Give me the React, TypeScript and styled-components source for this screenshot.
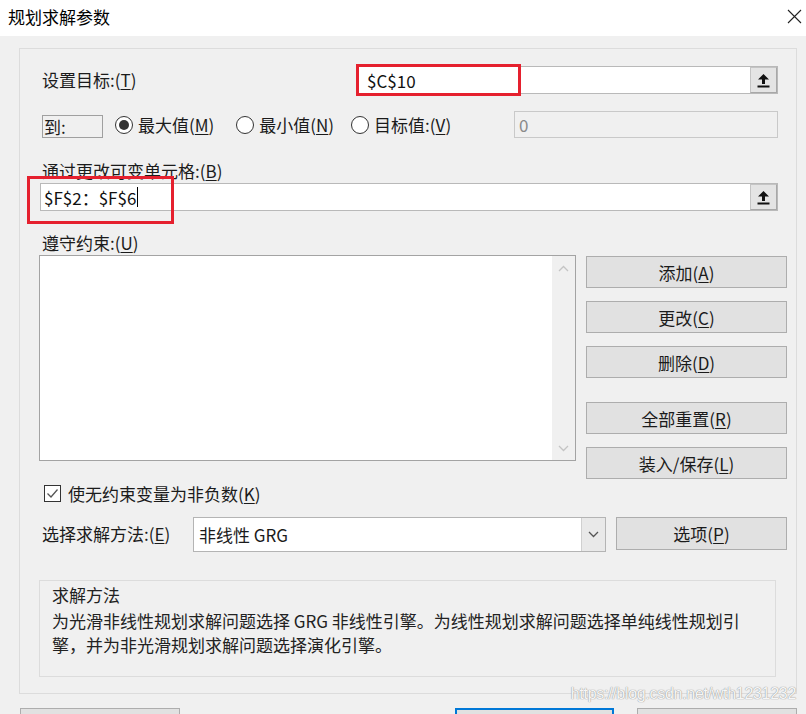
import React from 'react'
import styled, { createGlobalStyle } from 'styled-components'

const GlobalStyle = createGlobalStyle`
  html, body {
    margin: 0;
    padding: 0;
    background: #f0f0f0;
  }
  body {
    font-family: "Noto Sans CJK SC", "Noto Sans", sans-serif;
    color: #1b1b1b;
  }
`

const Window = styled.div`
  width: 806px;
  height: 714px;
  position: relative;
  overflow: hidden;
  background: #f0f0f0;
`

const TitleBar = styled.div`
  height: 36px;
  box-sizing: border-box;
  background: #fff;
  display: flex;
  align-items: center;
  justify-content: space-between;
  padding: 0 4px 4px 8px;
  font-size: 17px;
  color: #000;
`

const Body = styled.div`
  padding: 12px 9px 0 19px;
`

const Panel = styled.div`
  height: 646px;
  box-sizing: border-box;
  border: 1px solid #dcdcdc;
  padding: 0 9px 0 19px;
  font-size: 17px;
`

const Row = styled.div<{ $top: number; $h: number }>`
  display: flex;
  align-items: center;
  margin-top: ${(p) => p.$top}px;
  height: ${(p) => p.$h}px;
`

const Label = styled.div<{ $top?: number; $w?: number }>`
  padding-left: 3px;
  height: 20px;
  line-height: 20px;
  white-space: nowrap;
  margin-top: ${(p) => p.$top ?? 0}px;
  width: ${(p) => (p.$w ? `${p.$w}px` : 'auto')};
  flex-shrink: 0;
`

const Key = styled.span`
  text-decoration: underline;
  text-underline-offset: 2px;
`

const RefField = styled.div<{ $w: number; $ml?: string; $pl?: number }>`
  position: relative;
  width: ${(p) => p.$w}px;
  height: 28px;
  box-sizing: border-box;
  margin-left: ${(p) => p.$ml ?? '0'};
  margin-right: ${(p) => (p.$ml === 'auto' ? '9px' : '0')};
  background: #fff;
  border: 1px solid #b9b9b9;
  display: flex;
  align-items: center;
  padding-left: ${(p) => p.$pl ?? 6}px;
  font-size: 17px;
  color: #111;
`

const PickButton = styled.div`
  margin-left: auto;
  width: 27px;
  height: 26px;
  box-sizing: border-box;
  background: #e4e4e4;
  border: 1px solid #c4c4c4;
  border-right-color: #a8a8a8;
  border-bottom-color: #a8a8a8;
  display: flex;
  align-items: center;
  justify-content: center;
`

const RedMark = styled.div<{ $l: number; $t: number; $w: number; $h: number }>`
  position: absolute;
  left: ${(p) => p.$l}px;
  top: ${(p) => p.$t}px;
  width: ${(p) => p.$w}px;
  height: ${(p) => p.$h}px;
  box-sizing: border-box;
  border: 3px solid #e5202e;
  pointer-events: none;
`

const Caret = styled.span`
  display: inline-block;
  width: 1px;
  height: 20px;
  background: #000;
  margin-left: 1px;
  vertical-align: middle;
`

const ToBox = styled.div`
  margin-left: 3px;
  width: 61px;
  height: 23px;
  box-sizing: border-box;
  border: 1px solid #a0a0a0;
  line-height: 21px;
  padding-left: 1px;
  margin-top: 4px;
`

const RadioItem = styled.label<{ $ml: number }>`
  display: flex;
  align-items: center;
  gap: 5px;
  margin-left: ${(p) => p.$ml}px;
  white-space: nowrap;
`

const RadioCircle = styled.span<{ $on?: boolean }>`
  width: 18px;
  height: 18px;
  box-sizing: border-box;
  border-radius: 50%;
  border: 1px solid #333;
  background: #fff;
  display: flex;
  align-items: center;
  justify-content: center;
  &::after {
    content: '';
    width: 10px;
    height: 10px;
    border-radius: 50%;
    background: ${(p) => (p.$on ? '#333' : 'transparent')};
  }
`

const ValueInput = styled.div`
  margin-left: auto;
  margin-right: 9px;
  width: 264px;
  height: 27px;
  box-sizing: border-box;
  border: 1px solid #c9c9c9;
  background: #f0f0f0;
  color: #8a8a8a;
  padding-left: 4px;
  line-height: 25px;
  font-size: 17px;
`

const Main = styled.div`
  display: flex;
  align-items: flex-start;
  margin-top: 2px;
`

const LeftCol = styled.div`
  width: 537px;
  display: flex;
  flex-direction: column;
`

const ListBox = styled.div`
  width: 537px;
  height: 206px;
  box-sizing: border-box;
  border: 1px solid #a3a3a3;
  background: #fff;
  display: flex;
  justify-content: flex-end;
`

const ScrollTrack = styled.div`
  width: 23px;
  background: #f0f0f0;
  display: flex;
  flex-direction: column;
  align-items: center;
  justify-content: space-between;
  padding: 9px 0 8px;
`

const ButtonCol = styled.div`
  margin-left: 10px;
  margin-top: 1px;
  width: 201px;
  display: flex;
  flex-direction: column;
`

const Btn = styled.div<{ $w?: number; $top?: number; $h?: number; $ml?: number }>`
  width: ${(p) => (p.$w ? `${p.$w}px` : '100%')};
  height: ${(p) => p.$h ?? 32}px;
  margin-top: ${(p) => p.$top ?? 0}px;
  margin-left: ${(p) => p.$ml ?? 0}px;
  box-sizing: border-box;
  background: #e1e1e1;
  border: 1px solid #adadad;
  display: flex;
  align-items: center;
  justify-content: center;
  font-size: 17px;
  color: #1b1b1b;
  flex-shrink: 0;
`

const CheckRow = styled.div`
  display: flex;
  align-items: center;
  gap: 7px;
  margin-top: 24px;
  margin-left: 5px;
  height: 17px;
`

const CheckBox = styled.span`
  width: 17px;
  height: 17px;
  box-sizing: border-box;
  border: 1px solid #333;
  background: #fff;
  display: flex;
  align-items: center;
  justify-content: center;
`

const Select = styled.div`
  width: 416px;
  height: 35px;
  box-sizing: border-box;
  border: 1px solid #b4b4b4;
  background: #fff;
  display: flex;
  align-items: stretch;
`

const SelectValue = styled.div`
  flex: 1;
  padding-left: 5px;
  display: flex;
  align-items: center;
`

const SelectArrow = styled.div`
  width: 23px;
  background: #e9e9e9;
  border-left: 1px solid #d0d0d0;
  display: flex;
  align-items: center;
  justify-content: center;
`

const MethodRow = styled.div`
  display: flex;
  align-items: flex-start;
  margin-top: 15px;
  height: 35px;
`

const Info = styled.div`
  margin-top: 28px;
  width: 737px;
  height: 97px;
  box-sizing: border-box;
  border: 1px solid #dcdcdc;
  padding: 2px 12px 0;
  color: #222;
`

const InfoTitle = styled.div`
  line-height: 24px;
  margin-bottom: 2px;
`

const InfoText = styled.div`
  line-height: 24px;
  white-space: nowrap;
`

const Footer = styled.div`
  display: flex;
  margin-top: 14px;
  margin-left: 1px;
`

const FootBtn = styled.div<{ $primary?: boolean; $ml?: number }>`
  width: 160px;
  height: 32px;
  box-sizing: border-box;
  background: #e1e1e1;
  border: ${(p) => (p.$primary ? '2px solid #0078d7' : '1px solid #adadad')};
  margin-left: ${(p) => p.$ml ?? 0}px;
`

const Watermark = styled.div`
  position: absolute;
  right: 10px;
  bottom: 11px;
  font-family: "Liberation Sans", Arial, sans-serif;
  font-size: 16px;
  letter-spacing: -0.3px;
  color: #f6f6f6;
  text-shadow: 0 0 1px #8f8f8f, 0 0 1px #a8a8a8;
`

const PickIcon = () => (
  <svg width="13" height="15" viewBox="0 0 13 15">
    <path d="M6.5 1 L12 6.5 L8 6.5 L8 11 L5 11 L5 6.5 L1 6.5 Z" fill="#111" />
    <rect x="0.5" y="12.5" width="12" height="2" fill="#111" />
  </svg>
)

const Chevron = ({ up, color = '#c4c4c4' }: { up?: boolean; color?: string }) => (
  <svg width="11" height="7" viewBox="0 0 11 7">
    <path
      d={up ? 'M1 6 L5.5 1.5 L10 6' : 'M1 1 L5.5 5.5 L10 1'}
      fill="none"
      stroke={color}
      strokeWidth="1.3"
    />
  </svg>
)

const CloseIcon = () => (
  <svg width="15" height="15" viewBox="0 0 15 15">
    <path d="M1 1 L14 14 M14 1 L1 14" stroke="#222" strokeWidth="1.1" />
  </svg>
)

const CheckMark = () => (
  <svg width="13" height="11" viewBox="0 0 13 11">
    <path d="M1.5 5.5 L5 9 L11.5 1.5" fill="none" stroke="#555" strokeWidth="1.3" />
  </svg>
)

const Radio = ({ on, ml, children }: { on?: boolean; ml: number; children: React.ReactNode }) => (
  <RadioItem $ml={ml}>
    <RadioCircle $on={on} />
    <span>{children}</span>
  </RadioItem>
)

export default function App() {
  return (
    <Window>
      <GlobalStyle />
      <TitleBar>
        <span>规划求解参数</span>
        <CloseIcon />
      </TitleBar>
      <Body>
        <Panel>
          <Row $top={18} $h={26}>
            <Label>
              设置目标:(<Key>T</Key>)
            </Label>
            <RefField $w={421} $ml="auto" $pl={9}>
              $C$10
              <PickButton>
                <PickIcon />
              </PickButton>
              <RedMark $l={-2} $t={-3} $w={165} $h={32} />
            </RefField>
          </Row>

          <Row $top={18} $h={27}>
            <ToBox>到:</ToBox>
            <Radio on ml={12}>
              最大值(<Key>M</Key>)
            </Radio>
            <Radio ml={22}>
              最小值(<Key>N</Key>)
            </Radio>
            <Radio ml={17}>
              目标值:(<Key>V</Key>)
            </Radio>
            <ValueInput>0</ValueInput>
          </Row>

          <Label $top={23}>
            通过更改可变单元格:(<Key>B</Key>)
          </Label>
          <Row $top={2} $h={28}>
            <RefField $w={738} $ml="1px" $pl={3}>
              $F$2：$F$6
              <Caret />
              <PickButton>
                <PickIcon />
              </PickButton>
              <RedMark $l={-14} $t={-8} $w={147} $h={48} />
            </RefField>
          </Row>

          <Label $top={22}>
            遵守约束:(<Key>U</Key>)
          </Label>
          <Main>
            <LeftCol>
              <ListBox>
                <ScrollTrack>
                  <Chevron up />
                  <Chevron />
                </ScrollTrack>
              </ListBox>
              <CheckRow>
                <CheckBox>
                  <CheckMark />
                </CheckBox>
                <span>
                  使无约束变量为非负数(<Key>K</Key>)
                </span>
              </CheckRow>
            </LeftCol>
            <ButtonCol>
              <Btn>
                添加(<Key>A</Key>)
              </Btn>
              <Btn $top={13}>
                更改(<Key>C</Key>)
              </Btn>
              <Btn $top={13}>
                删除(<Key>D</Key>)
              </Btn>
              <Btn $top={24}>
                全部重置(<Key>R</Key>)
              </Btn>
              <Btn $top={13}>
                装入/保存(<Key>L</Key>)
              </Btn>
            </ButtonCol>
          </Main>

          <MethodRow>
            <Label $w={151} $top={7}>
              选择求解方法:(<Key>E</Key>)
            </Label>
            <Select>
              <SelectValue>非线性 GRG</SelectValue>
              <SelectArrow>
                <Chevron color="#555" />
              </SelectArrow>
            </Select>
            <Btn $w={171} $h={33} $ml={10}>
              选项(<Key>P</Key>)
            </Btn>
          </MethodRow>

          <Info>
            <InfoTitle>求解方法</InfoTitle>
            <InfoText>
              为光滑非线性规划求解问题选择 GRG 非线性引擎。为线性规划求解问题选择单纯线性规划引
              <br />
              擎，并为非光滑规划求解问题选择演化引擎。
            </InfoText>
          </Info>
        </Panel>
        <Footer>
          <FootBtn />
          <FootBtn $primary $ml={275} />
          <FootBtn $ml={23} />
        </Footer>
      </Body>
      <Watermark>https://blog.csdn.net/wth1231232</Watermark>
    </Window>
  )
}
